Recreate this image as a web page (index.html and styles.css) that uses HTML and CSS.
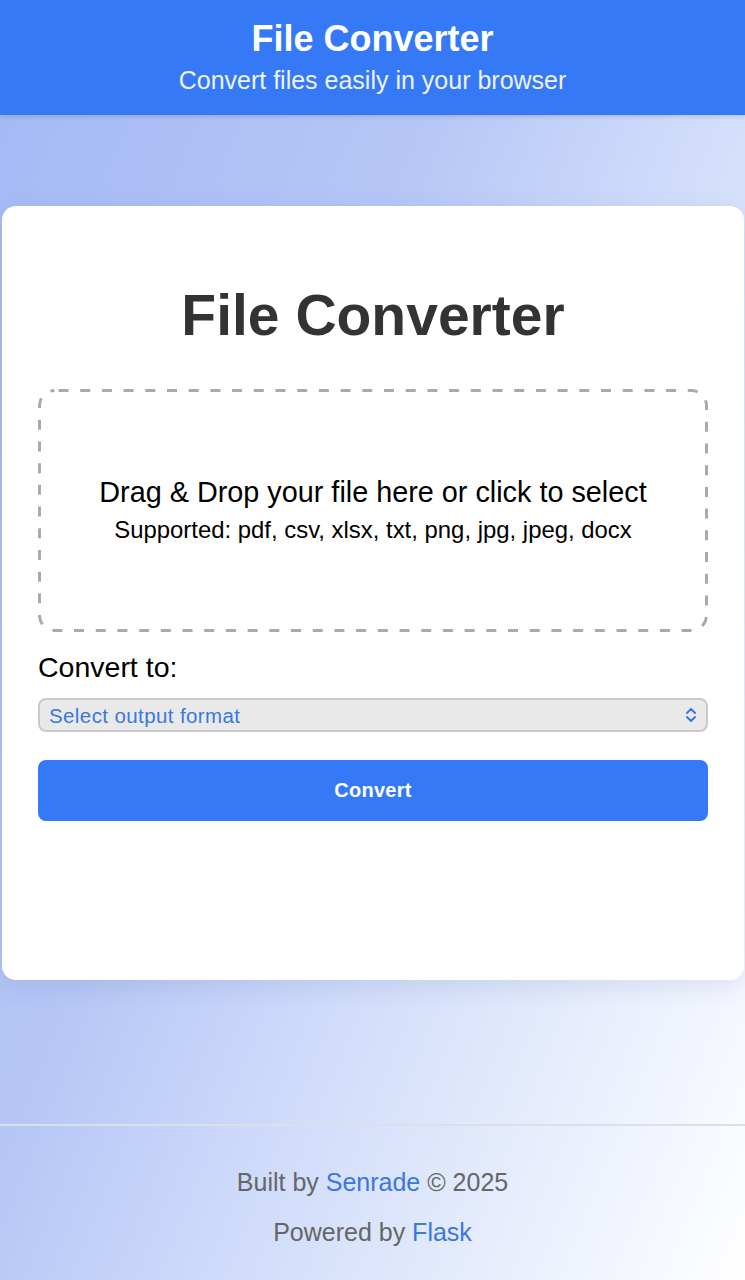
FILE: index.html
```html
<!DOCTYPE html>
<html lang="en">
<head>
<meta charset="utf-8">
<title>File Converter</title>
<link rel="stylesheet" href="styles.css">
</head>
<body>
<header class="site-header">
  <div class="site-title">File Converter</div>
  <div class="site-subtitle">Convert files easily in your browser</div>
</header>
<main class="main">
  <section class="card">
    <h1 class="card-title">File Converter</h1>
    <div class="dropzone">
      <div class="drop-main">Drag &amp; Drop your file here or click to select</div>
      <div class="drop-sub">Supported: pdf, csv, xlsx, txt, png, jpg, jpeg, docx</div>
    </div>
    <label class="field-label" for="fmt">Convert to:</label>
    <div class="select-wrap">
      <select id="fmt" class="select">
        <option>Select output format</option>
      </select>
      <svg class="select-icon" width="12" height="16" viewBox="0 0 12 16" aria-hidden="true">
        <path d="M2 6 L6 2 L10 6" fill="none" stroke="#3a78e0" stroke-width="2" stroke-linecap="round" stroke-linejoin="round"/>
        <path d="M2 10 L6 14 L10 10" fill="none" stroke="#3a78e0" stroke-width="2" stroke-linecap="round" stroke-linejoin="round"/>
      </svg>
    </div>
    <button class="btn">Convert</button>
  </section>
</main>
<footer class="site-footer">
  <p class="footer-line">Built by <a href="#" class="footer-link">Senrade</a> © 2025</p>
  <p class="footer-line">Powered by <a href="#" class="footer-link">Flask</a></p>
</footer>
</body>
</html>
```
FILE: styles.css
```css
* { box-sizing: border-box; }
html, body { margin: 0; padding: 0; }
body {
  min-height: 1280px;
  font-family: "Liberation Sans", Arial, sans-serif;
  background: linear-gradient(112deg, #a3b8f5 0%, #b6c7f6 38%, #cfdbfa 58%, #ffffff 100%);
  display: flex;
  flex-direction: column;
}
.site-header {
  background: #3579f6;
  color: #fff;
  text-align: center;
  height: 115px;
  padding-top: 17px;
  box-shadow: 0 2px 4px rgba(0,0,0,0.12);
}
.site-title {
  font-size: 36px;
  font-weight: bold;
  line-height: 44px;
}
.site-subtitle {
  font-size: 25px;
  line-height: 30px;
  margin-top: 4px;
  color: #eef3ff;
}
.main {
  padding: 91px 1px 0 2px;
}
.card {
  background: #fff;
  border-radius: 14px;
  box-shadow: 0 6px 24px rgba(60, 80, 140, 0.12);
  height: 774px;
  padding: 76px 36px 0 36px;
  display: flex;
  flex-direction: column;
}
.card-title {
  margin: 0;
  text-align: center;
  font-size: 57px;
  line-height: 66px;
  font-weight: bold;
  color: #333;
}
.dropzone {
  margin-top: 41px;
  height: 243px;
  border-radius: 16px;
  background-image: url("data:image/svg+xml,%3Csvg xmlns='http://www.w3.org/2000/svg' width='670' height='243'%3E%3Crect x='1.5' y='1.5' width='667' height='240' rx='15' ry='15' fill='none' stroke='%23aaaaaa' stroke-width='3' stroke-dasharray='10 11.7' stroke-dashoffset='-4'/%3E%3C/svg%3E");
  background-repeat: no-repeat;
  background-size: 100% 100%;
  display: flex;
  flex-direction: column;
  align-items: center;
  justify-content: center;
  color: #000;
  text-align: center;
}
.drop-main { font-size: 28.8px; line-height: 38px; }
.drop-sub { font-size: 23.9px; line-height: 38px; }
.field-label {
  margin-top: 18px;
  font-size: 28.5px;
  line-height: 34px;
  color: #000;
}
.select-wrap {
  position: relative;
  margin-top: 14px;
}
.select {
  -webkit-appearance: none;
  appearance: none;
  width: 100%;
  height: 34px;
  background: #e9e9e9;
  border: 2px solid #c9c9c9;
  border-radius: 8px;
  padding: 0 0 0 9px;
  font-family: "Liberation Sans", Arial, sans-serif;
  font-size: 20.5px;
  letter-spacing: 0.4px;
  color: #3a78e0;
  outline: none;
}
.select-icon {
  position: absolute;
  right: 11px;
  top: 9px;
  pointer-events: none;
}
.btn {
  margin-top: 28px;
  height: 61px;
  width: 100%;
  background: #3579f6;
  color: #fff;
  border: none;
  border-radius: 8px;
  font-family: "Liberation Sans", Arial, sans-serif;
  font-size: 20px;
  font-weight: bold;
  letter-spacing: 0.3px;
}
.site-footer {
  margin-top: 144px;
  border-top: 2px solid #dcdfe6;
  padding-top: 41px;
  text-align: center;
}
.footer-line {
  margin: 0 0 20px 0;
  font-size: 25px;
  line-height: 30px;
  color: #666;
}
.footer-link {
  color: #3a78e0;
  text-decoration: none;
}
```
